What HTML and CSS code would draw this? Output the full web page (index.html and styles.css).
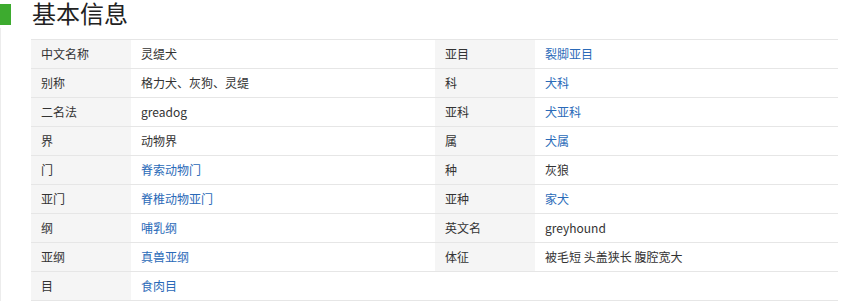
FILE: index.html
```html
<!DOCTYPE html>
<html lang="zh-CN">
<head>
<meta charset="utf-8">
<title>基本信息</title>
<link rel="stylesheet" href="styles.css">
</head>
<body>
<div class="title-row">
  <span class="title-bar"></span>
  <h2 class="title">基本信息</h2>
</div>
<div class="content">
  <div class="basic-info">
    <dl class="info-col info-left">
      <div class="item"><dt>中文名称</dt><dd>灵缇犬</dd></div>
      <div class="item"><dt>别称</dt><dd>格力犬、灰狗、灵缇</dd></div>
      <div class="item"><dt>二名法</dt><dd>greadog</dd></div>
      <div class="item"><dt>界</dt><dd>动物界</dd></div>
      <div class="item"><dt>门</dt><dd><a href="#">脊索动物门</a></dd></div>
      <div class="item"><dt>亚门</dt><dd><a href="#">脊椎动物亚门</a></dd></div>
      <div class="item"><dt>纲</dt><dd><a href="#">哺乳纲</a></dd></div>
      <div class="item"><dt>亚纲</dt><dd><a href="#">真兽亚纲</a></dd></div>
      <div class="item"><dt>目</dt><dd><a href="#">食肉目</a></dd></div>
    </dl>
    <dl class="info-col info-right">
      <div class="item"><dt>亚目</dt><dd><a href="#">裂脚亚目</a></dd></div>
      <div class="item"><dt>科</dt><dd><a href="#">犬科</a></dd></div>
      <div class="item"><dt>亚科</dt><dd><a href="#">犬亚科</a></dd></div>
      <div class="item"><dt>属</dt><dd><a href="#">犬属</a></dd></div>
      <div class="item"><dt>种</dt><dd>灰狼</dd></div>
      <div class="item"><dt>亚种</dt><dd><a href="#">家犬</a></dd></div>
      <div class="item"><dt>英文名</dt><dd>greyhound</dd></div>
      <div class="item"><dt>体征</dt><dd>被毛短 头盖狭长 腹腔宽大</dd></div>
    </dl>
  </div>
</div>
</body>
</html>
```
FILE: styles.css
```css
html, body {
  margin: 0;
  padding: 0;
  background: #fff;
}
body {
  font-family: "Liberation Sans", Arial, "Noto Sans CJK SC", sans-serif;
  color: #333;
  width: 867px;
  height: 301px;
  overflow: hidden;
}
.title-row {
  display: flex;
  align-items: flex-start;
  height: 28px;
}
.title-bar {
  display: block;
  width: 11px;
  height: 21px;
  margin-top: 4px;
  background: #3dab2f;
}
.title {
  margin: 0 0 0 21px;
  padding-top: 2px;
  font-family: "Liberation Sans", "Noto Sans CJK SC", sans-serif;
  font-weight: normal;
  font-size: 24px;
  line-height: 26px;
  color: #222;
}
.content {
  border-left: 1px solid #ececec;
  padding-top: 11px;
  padding-left: 30px;
}
.basic-info {
  display: flex;
  width: 807px;
  border-top: 1px solid #e6e6e6;
  border-bottom: 1px solid #e6e6e6;
}
.info-col {
  margin: 0;
  display: flex;
  flex-direction: column;
}
.info-left { width: 404px; }
.info-right { width: 403px; }
.item {
  display: flex;
  height: 28px;
  border-bottom: 1px solid #e6e6e6;
}
.info-left .item:last-child {
  border-bottom: none;
}
.item dt, .item dd {
  margin: 0;
  padding-left: 10px;
  font-family: "Noto Sans CJK SC", sans-serif;
  font-size: 12px;
  line-height: 28px;
  white-space: nowrap;
}
.item dt {
  width: 90px;
  flex: none;
  background: #f5f5f5;
  color: #333;
}
.item dd {
  flex: 1;
  color: #333;
}
.item dd a {
  color: #2a6ab8;
  text-decoration: none;
}
```
